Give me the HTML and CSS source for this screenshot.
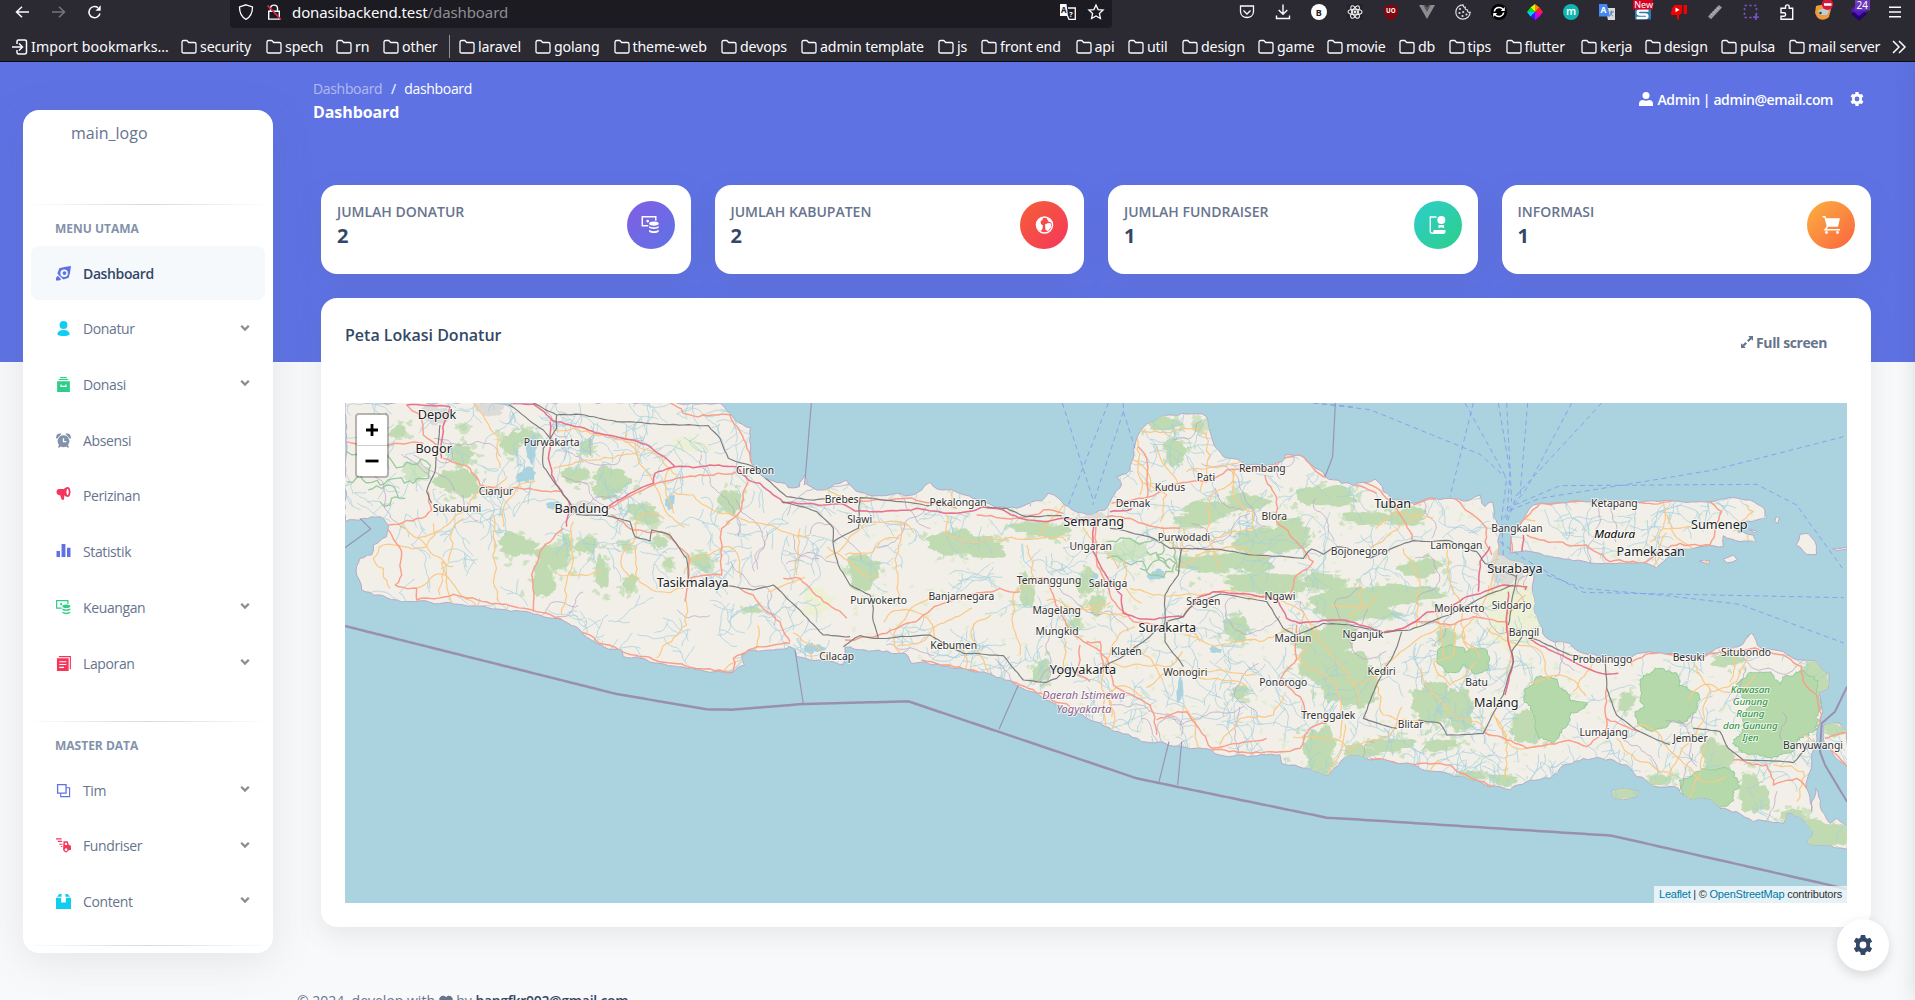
FILE: index.html
```html
<!DOCTYPE html>
<html lang="id">
<head>
<meta charset="utf-8">
<title>Dashboard</title>
<link rel="stylesheet" href="styles.css">
</head>
<body>
<svg class="defs" width="0" height="0" aria-hidden="true">
  <symbol id="folder" viewBox="0 0 16 16"><path d="M1 3.2C1 2 1.600 1.500 2.600 1.500h3.200l1.900 2h5.700c1 0 1.600.6 1.600 1.600v7.300c0 1-.6 1.600-1.600 1.600H2.600c-1 0-1.600-.6-1.600-1.600z" fill="none" stroke="#fbfbfe" stroke-width="1.300"/></symbol>
  <symbol id="chev" viewBox="0 0 10 8"><path d="M1.200 1.700 5 5.500l3.800-3.800" fill="none" stroke="#8b8d92" stroke-width="2.300"/></symbol>
  <symbol id="gear" viewBox="0 0 20 20"><path fill-rule="evenodd" d="M7.900 0h4.200l.6 2.800 1.600.9 2.700-.9 2.100 3.600L17 8.300v3.400l2.100 1.900-2.100 3.600-2.700-.9-1.600.9-.6 2.800H7.900l-.6-2.800-1.600-.9-2.700.9-2.100-3.600L3 11.700V8.300L.9 6.400 3 2.800l2.700.9 1.600-.9zM10 6.600a3.400 3.400 0 1 0 0 6.800 3.400 3.400 0 0 0 0-6.800z" fill="currentColor"/></symbol>
  <symbol id="money" viewBox="0 0 16 16"><path d="M6 8.700H.7V.7h12v3.600" fill="none" stroke="currentColor" stroke-width="1.300"/><circle cx="5.500" cy="4.500" r="1.200" fill="currentColor"/><ellipse cx="11" cy="6.700" rx="4.300" ry="1.900" fill="currentColor"/><path d="M6.700 8.800c1.500 1.600 7 1.600 8.600 0v1.500c-1.500 1.700-7 1.700-8.600 0zM6.700 12.300c1.500 1.600 7 1.600 8.600 0v1.400c-1.500 2-7 2-8.600 0z" fill="currentColor"/></symbol>
</svg>

<header class="browser">
  <div class="toolbar">
    <div class="nav">
      <svg viewBox="0 0 16 16"><path d="M14 8H1.500M7 2.800 1.500 8 7 13.200" fill="none" stroke="#fbfbfe" stroke-width="1.500"/></svg>
      <svg viewBox="0 0 16 16"><path d="M1 8h12.500M8 2.800 13.500 8 8 13.200" fill="none" stroke="#77767d" stroke-width="1.500"/></svg>
      <svg viewBox="0 0 16 16"><path d="M13 9.500A5.600 5.600 0 1 1 11 3.700" fill="none" stroke="#fbfbfe" stroke-width="1.500"/><path d="M13.700 1.300v5.400H8.500z" fill="#fbfbfe"/></svg>
    </div>
    <div class="urlbar">
      <svg viewBox="0 0 16 16"><path d="M8 .8 14.500 3c0 6.200-1.600 9.800-6.500 12.300C3.100 12.800 1.500 9.200 1.500 3z" fill="none" stroke="#fbfbfe" stroke-width="1.300"/></svg>
      <svg viewBox="0 0 16 16"><path d="M4.500 7V4.300C4.500 0 11.500 0 11.500 4.300V7M2.700 7.300h10.600v7.800H2.700z" fill="none" stroke="#fbfbfe" stroke-width="1.400"/><path d="M1.500 1.500 15 15.500" stroke="#e22850" stroke-width="1.700"/></svg>
      <div class="url">donasibackend.test<span>/dashboard</span></div>
      <svg class="push" viewBox="0 0 16 16"><path d="M0 0h6.500l1.500 12H0z" fill="#fbfbfe"/><path d="M8 4h7.300v11.300H9L7.500 12" fill="none" stroke="#fbfbfe" stroke-width="1.300"/><text x="1" y="9" font-size="8" font-weight="700" fill="#1c1b22">A</text><text x="9.200" y="12.500" font-size="7" font-weight="700" fill="#fbfbfe">?</text></svg>
      <svg viewBox="0 0 16 16"><path d="m8 1 2.100 4.600 5 .5-3.700 3.400 1 5L8 12l-4.400 2.500 1-5L.9 6.100l5-.5z" fill="none" stroke="#fbfbfe" stroke-width="1.300"/></svg>
    </div>
    <div class="exts">
      <svg viewBox="0 0 16 16"><path d="M1.500 2h13v5.500c0 8-13 8-13 0zM4.500 6.500 8 10l3.500-3.500" fill="none" stroke="#fbfbfe" stroke-width="1.300"/></svg>
      <svg viewBox="0 0 16 16"><path d="M8 .5V10M3.700 6 8 10.300 12.300 6M1.500 11.500v3h13v-3" fill="none" stroke="#fbfbfe" stroke-width="1.400"/></svg>
      <svg viewBox="0 0 16 16"><circle cx="8" cy="8" r="8" fill="#fff"/><text x="4.800" y="11.500" font-size="9" font-weight="700" fill="#222">B</text></svg>
      <svg viewBox="0 0 16 16"><rect width="16" height="16" fill="#242329"/><g fill="none" stroke="#eee" stroke-width="1.100"><ellipse cx="8" cy="8" rx="7" ry="2.700"/><ellipse cx="8" cy="8" rx="7" ry="2.700" transform="rotate(60 8 8)"/><ellipse cx="8" cy="8" rx="7" ry="2.700" transform="rotate(120 8 8)"/></g><circle cx="8" cy="8" r="1.400" fill="#eee"/></svg>
      <svg viewBox="0 0 16 16"><path d="M8 0c2 1.600 4.500 2 7 2v6c0 4-3 6.500-7 8-4-1.500-7-4-7-8V2c2.500 0 5-.4 7-2z" fill="#800610"/><text x="3" y="9.300" font-size="6.200" font-weight="700" fill="#fff">UO</text></svg>
      <svg viewBox="0 0 16 16"><path d="M0 1h4.500L8 7.500 11.500 1H16L8 15z" fill="#8d8d91"/><path d="M4.500 1h2L8 3.800 9.500 1h2L8 7.500z" fill="#5b5b60"/></svg>
      <svg viewBox="0 0 16 16"><path d="M8 .8a7.200 7.200 0 1 0 7.200 7.500c-2 .5-3-1-2.700-2.300-2 0-2.800-1.300-2.200-2.600C8.800 3.300 8 2.300 8 .8z" fill="none" stroke="#ddd" stroke-width="1.200"/><g fill="#ddd"><circle cx="5" cy="5" r="1.100"/><circle cx="4.500" cy="9" r="1.100"/><circle cx="8.200" cy="8" r="1.100"/><circle cx="7.500" cy="12" r="1.100"/><circle cx="11.500" cy="10.500" r="1.100"/></g></svg>
      <svg viewBox="0 0 16 16"><circle cx="8" cy="8" r="8" fill="#000"/><path d="M3.300 7.500c.7-4.500 7-5.500 9-1.500M12.700 8.500c-.7 4.500-7 5.500-9 1.500" fill="none" stroke="#fff" stroke-width="1.500"/><path d="M13.800 3v4h-4zM2.200 13V9h4z" fill="#fff"/></svg>
      <svg viewBox="0 0 16 16"><path d="M8 8V0L3.500 3.500z" fill="#cf0"/><path d="M8 8V0l4.500 3.500z" fill="#f80"/><path d="m8 8 4.500-4.500L16 8z" fill="#f22"/><path d="M8 8h8l-3.500 4.500z" fill="#f0a"/><path d="M8 8v8l4.500-3.500z" fill="#c0f"/><path d="M8 8v8l-4.500-3.500z" fill="#22f"/><path d="M8 8H0l3.500 4.500z" fill="#0cf"/><path d="M8 8H0l3.500-4.500z" fill="#0d3"/></svg>
      <svg viewBox="0 0 16 16"><circle cx="8" cy="8" r="8" fill="#0fb5b0"/><text x="3" y="11.300" font-size="10.500" font-weight="600" fill="#fff">m</text></svg>
      <svg viewBox="0 0 16 16"><path d="M6 4h10v12H9z" fill="#dcdcdc"/><path d="M0 0h8l3 12.500H0z" fill="#4688f1"/><text x="1.500" y="9" font-size="8.500" font-weight="700" fill="#fff">A</text><path d="M10.500 8h4.500M12.700 6.500V8c0 2-1 3.500-2 4M11.300 9c.7 1.600 1.700 2.500 3 3" fill="none" stroke="#5a7fb5"/></svg>
      <svg class="wide" viewBox="0 0 20 20"><path d="M2 7h16v11.500H2z" fill="#2b7dac"/><path d="M15.500 9.500H7c-3 0-3 4 0 4h5.500c2.500 0 2.500 3.500 0 3.500H3.500" fill="none" stroke="#fff" stroke-width="2.500"/><rect x="0" y="-1" width="20" height="9.500" fill="#d70022"/><text x="1.200" y="7.200" font-size="9" fill="#fff">New</text></svg>
      <svg viewBox="0 0 16 16"><path d="M4 1h7v8L8 11v5c-3 0-2-4-2-5H0C0 7 1 3 4 1zM12.500 1H16v9h-3.500z" fill="#f40000"/><path d="m4.500 3.500 4 2.300-4 2.400z" fill="#fff"/></svg>
      <svg viewBox="0 0 16 16"><path d="M1 12.500 12 1l3 2.500L4 15.300z" fill="#98989c"/><path d="m4 9.500 1.500 1.500M6 7.500 7.500 9M8 5.500 9.500 7M10 3.500 11.500 5" stroke="#c9c9cc"/></svg>
      <svg viewBox="0 0 16 16"><path d="M1.500 1.500h12v12h-12z" fill="none" stroke="#7a50c7" stroke-width="1.600" stroke-dasharray="2.400 2.400"/><path d="M13 10v6M10 13h6" stroke="#7a50c7" stroke-width="1.700"/></svg>
      <svg viewBox="0 0 16 16"><path d="M2 6V4.200h4.500V2.800c0-2.600 3.700-2.600 3.700 0v1.400h3.500v11H2v-3h3c2.200 0 2.200-3.400 0-3.400H2z" fill="none" stroke="#fbfbfe" stroke-width="1.400"/></svg>
      <svg class="wide" viewBox="0 0 20 20"><path d="M3 5c5-2 12-1 15 3l-2 8c-4 4-10 3-12 0L2 12z" fill="#f09a3a"/><path d="M5 10c3-3 8-3 11 0l-2 4H7z" fill="#b8cfd8"/><circle cx="7.500" cy="12" r="1.200" fill="#333"/><circle cx="14.500" cy="3.300" r="5.700" fill="#d7183c"/><path d="M11 3.500h7.500" stroke="#fff" stroke-width="2.500"/></svg>
      <svg class="wide" viewBox="0 0 20 20"><path d="m2 9 8-8 8 8-8 8z" fill="#5b14c8"/><path d="m2 13 3-2 5 4 5-4 3 2-8 7z" fill="#21056b"/><rect x="6" y="-1" width="15" height="10.500" fill="#6b39b8"/><text x="7.500" y="7.500" font-size="10" fill="#fff">24</text></svg>
      <svg viewBox="0 0 16 16"><path d="M2 3.200h12M2 8h12M2 12.800h12" stroke="#fbfbfe" stroke-width="1.500"/></svg>
    </div>
  </div>
  <div class="bookmarks">
    <span><svg viewBox="0 0 16 16"><path d="M5 5V2.500C5 1.500 5.500 1 6.500 1h6.200c1 0 1.800.7 1.800 1.700v10.600c0 1-.8 1.700-1.800 1.700H6.500c-1 0-1.500-.5-1.500-1.500V11M0 8h10M7 4.500 10.500 8 7 11.500" fill="none" stroke="#fbfbfe" stroke-width="1.500"/></svg><em>Import bookmarks…</em></span>
    <span><svg><use href="#folder"/></svg>security</span>
    <span><svg><use href="#folder"/></svg>spech</span>
    <span><svg><use href="#folder"/></svg>rn</span>
    <span><svg><use href="#folder"/></svg>other</span>
    <i></i>
    <span><svg><use href="#folder"/></svg>laravel</span>
    <span><svg><use href="#folder"/></svg>golang</span>
    <span><svg><use href="#folder"/></svg>theme-web</span>
    <span><svg><use href="#folder"/></svg>devops</span>
    <span><svg><use href="#folder"/></svg>admin template</span>
    <span><svg><use href="#folder"/></svg>js</span>
    <span><svg><use href="#folder"/></svg>front end</span>
    <span><svg><use href="#folder"/></svg>api</span>
    <span><svg><use href="#folder"/></svg>util</span>
    <span><svg><use href="#folder"/></svg>design</span>
    <span><svg><use href="#folder"/></svg>game</span>
    <span><svg><use href="#folder"/></svg>movie</span>
    <span><svg><use href="#folder"/></svg>db</span>
    <span><svg><use href="#folder"/></svg>tips</span>
    <span><svg><use href="#folder"/></svg>flutter</span>
    <span><svg><use href="#folder"/></svg>kerja</span>
    <span><svg><use href="#folder"/></svg>design</span>
    <span><svg><use href="#folder"/></svg>pulsa</span>
    <span><svg><use href="#folder"/></svg>mail server</span>
    <span><svg viewBox="0 0 16 16"><path d="m1 2 6 6-6 6M7 2l6 6-6 6" fill="none" stroke="#fbfbfe" stroke-width="1.500"/></svg></span>
  </div>
</header>

<div class="page">
  <aside class="sidebar">
    <div class="logo">main_logo</div>
    <hr>
    <h6>MENU UTAMA</h6>
    <ul>
      <li class="active"><svg viewBox="0 0 16 16" color="#5e72e4"><path fill-rule="evenodd" d="M16 0 9 1 3.500 2.500 1.500 8l1.300 1.500L6.500 13l1.500 1.500 5.500-2L15 7zM8.700 3.700a4 4 0 1 1 0 8 4 4 0 0 1 0-8z" fill="currentColor"/><circle cx="9" cy="7.500" r="2" fill="currentColor"/><path d="M2 10.500 5.500 14 3.500 15.500H0v-3z" fill="currentColor"/></svg>Dashboard</li>
      <li><svg viewBox="0 0 16 16" color="#11cdef"><circle cx="8" cy="4.200" r="4.200" fill="currentColor"/><path d="M1.500 14c0-6 13-6 13 0 0 2.500-13 2.500-13 0z" fill="currentColor"/></svg>Donatur<svg class="chev"><use href="#chev"/></svg></li>
      <li><svg viewBox="0 0 16 16" color="#2dce89"><path d="M4.500 0h7v1.200h-7zM3 2.200h10v1H3z" fill="currentColor"/><path fill-rule="evenodd" d="M1.200 4.400h13.600V16H1.200zM4.700 8v2.700h6.600V8H10v1.300H6V8z" fill="currentColor"/></svg>Donasi<svg class="chev"><use href="#chev"/></svg></li>
      <li><svg viewBox="0 0 16 16" color="#8392ab"><path fill-rule="evenodd" d="M8 2.500a6.300 6.300 0 0 1 4.800 10.300L14 15.500h-2l-.8-1.200a6.600 6.600 0 0 1-6.400 0L4 15.500H2l1.200-2.700A6.300 6.300 0 0 1 8 2.500zM7.300 5.500v4.300h3.700V8.500H8.700v-3z" fill="currentColor"/><path d="M0 5.500C0 1 3 0 6 .8L1 6zM16 5.500C16 1 13 0 10 .8L15 6z" fill="currentColor"/></svg>Absensi</li>
      <li class="raise"><svg viewBox="0 0 16 16" color="#f5365c"><path fill-rule="evenodd" d="M8.500 2.300C10 .7 12 0 13 0c4 0 4 11.500 0 11.500-1.500 0-3-1-4-2L8.500 14.500H6L4.200 9.300H3C-1 9.300-1 2.300 3 2.300zM12.700 2c-1.800 1-1.800 6.500 0 7.500 1.800-1 1.800-6.500 0-7.500z" fill="currentColor"/></svg>Perizinan</li>
      <li class="raise"><svg viewBox="0 0 16 16" color="#5e72e4"><path d="M0 9h4v7H0zM5.800 1h4.400v15H5.800zM12 5.500h4V16h-4z" fill="currentColor"/></svg>Statistik</li>
      <li><svg color="#2dce89"><use href="#money"/></svg>Keuangan<svg class="chev"><use href="#chev"/></svg></li>
      <li><svg viewBox="0 0 16 16" color="#f5365c"><path d="M3 .7h12.300V14" fill="none" stroke="currentColor" stroke-width="1.200"/><path fill-rule="evenodd" d="M1 2.500h12.500V16H1zM3.500 5.500v1.200H11V5.500zm0 3v1.200H11V8.500zm0 3v1.200h5v-1.200z" fill="currentColor"/></svg>Laporan<svg class="chev"><use href="#chev"/></svg></li>
    </ul>
    <hr class="mid">
    <h6>MASTER DATA</h6>
    <ul class="second">
      <li><svg viewBox="0 0 16 16" color="#5e72e4"><path d="M1.700 1.700h9v9h-9z" fill="none" stroke="currentColor" stroke-width="1.400"/><path d="M5 11v3.500h9.500V5H11" fill="none" stroke="currentColor" stroke-width="1.200"/></svg>Tim<svg class="chev"><use href="#chev"/></svg></li>
      <li><svg viewBox="0 0 16 16" color="#f5365c"><path d="M0 .3h6v1.200H0zM2 3h4.500v1.200H2zM3.500 6H7v1.200H3.500zM5 8.700h2v1H5z" fill="currentColor"/><path fill-rule="evenodd" d="M8 3.500h4.500l1 3.500 2.500 1.500v4l-3 .7c-1 3-4.500 2-4.500.3L7.500 13zM9.500 5v2.500H12L11.300 5zM10.700 11a1.400 1.400 0 1 0 0 2.800 1.400 1.400 0 0 0 0-2.800z" fill="currentColor"/></svg>Fundriser<svg class="chev"><use href="#chev"/></svg></li>
      <li><svg viewBox="0 0 16 16" color="#11cdef"><path d="M3.500 0H6v3H1zM10 0h2.500L15 3h-5zM0 4h5.500v5h5V4H16v12H0z" fill="currentColor"/></svg>Content<svg class="chev"><use href="#chev"/></svg></li>
    </ul>
    <hr class="last">
  </aside>

  <main class="main">
    <div class="topnav">
      <div>
        <div class="crumbs"><span>Dashboard</span><b>/</b>dashboard</div>
        <div class="title">Dashboard</div>
      </div>
      <div class="user">
        <svg viewBox="0 0 14 14"><circle cx="7" cy="3.500" r="3.500" fill="#fff"/><path d="M0 14V11.500C0 9 2 8 4 8c2 1 4 1 6 0 2 0 4 1 4 3.500V14z" fill="#fff"/></svg>
        Admin | admin@email.com
        <svg class="cog"><use href="#gear"/></svg>
      </div>
    </div>

    <div class="cards">
      <div class="card"><div><p>JUMLAH DONATUR</p><strong>2</strong></div><div class="dot violet"><svg><use href="#money"/></svg></div></div>
      <div class="card"><div><p>JUMLAH KABUPATEN</p><strong>2</strong></div><div class="dot red"><svg viewBox="0 0 18 18"><circle cx="9" cy="9" r="8" fill="none" stroke="#fff" stroke-width="1.500"/><path d="M1 8c0-4 3-6.500 6-7l.5 2L5 5.500 5.500 8l2 1.500-.5 3L5.500 15C2.500 14 1 11 1 8zM11 1.500c2.500.7 4.500 2.500 5 5L13.500 6 12 4zM9.500 8.500 12.500 7l3 .5v4L12.500 15 10 14z" fill="#fff"/></svg></div></div>
      <div class="card"><div><p>JUMLAH FUNDRAISER</p><strong>1</strong></div><div class="dot green"><svg viewBox="0 0 18 18"><path d="M8 1H1.800v14.500c0 1 .7 1.700 1.700 1.700H15" fill="none" stroke="#fff" stroke-width="1.400"/><circle cx="12.800" cy="4" r="4" fill="#fff"/><path d="M10 9h5.600v3.300l-2.800-1-2.800 1zM5 14h12v1.500c0 1.500-1 2.400-2 2.400H3.500C4.800 17 5 16 5 14z" fill="#fff"/></svg></div></div>
      <div class="card"><div><p>INFORMASI</p><strong>1</strong></div><div class="dot orange"><svg viewBox="0 0 18 18"><path d="M0 .8h2.500L5 10.500 2.500 13.700h15" fill="none" stroke="#fff" stroke-width="1.400"/><path d="M3 2.300h14.500l-2 8.500H5z" fill="#fff"/><circle cx="4" cy="16.500" r="1.400" fill="#fff"/><circle cx="15" cy="16.500" r="1.400" fill="#fff"/></svg></div></div>
    </div>

    <section class="mapcard">
      <div class="maphead">
        <h5>Peta Lokasi Donatur</h5>
        <div class="full"><svg viewBox="0 0 12 12"><path d="M7.200 0H12v4.800L10.300 3.200 7.500 6 6 4.500l2.800-2.800zM4.800 12H0V7.200l1.700 1.600L4.500 6 6 7.500l-2.800 2.800z" fill="#67748e"/></svg>Full screen</div>
      </div>
      <div class="map">
        <svg id="java" viewBox="15 24 4506 1500" preserveAspectRatio="none">
          <g id="layers"></g>
          <g class="place big">
            <text x="291" y="71">Depok</text><text x="281" y="174">Bogor</text><text x="725" y="354">Bandung</text><text x="1058" y="577">Tasikmalaya</text>
            <text x="2261" y="392">Semarang</text><text x="2482" y="711">Surakarta</text><text x="2229" y="838">Yogyakarta</text>
            <text x="3158" y="340">Tuban</text><text x="3525" y="533">Surabaya</text><text x="3469" y="936">Malang</text><text x="3932" y="484">Pamekasan</text><text x="4138" y="401">Sumenep</text>
          </g>
          <g class="place">
            <text x="635" y="152">Purwakarta</text><text x="468" y="299">Cianjur</text><text x="351" y="350">Sukabumi</text><text x="1245" y="237">Cirebon</text>
            <text x="1505" y="323">Brebes</text><text x="1559" y="384">Slawi</text><text x="1490" y="794">Cilacap</text><text x="1854" y="334">Pekalongan</text>
            <text x="2379" y="335">Demak</text><text x="2490" y="288">Kudus</text><text x="2598" y="257">Pati</text><text x="2767" y="232">Rembang</text><text x="2803" y="376">Blora</text>
            <text x="2252" y="465">Ungaran</text><text x="2532" y="438">Purwodadi</text><text x="2127" y="568">Temanggung</text><text x="2304" y="576">Salatiga</text>
            <text x="1616" y="628">Purwokerto</text><text x="1864" y="615">Banjarnegara</text><text x="2150" y="657">Magelang</text><text x="2151" y="719">Mungkid</text>
            <text x="1841" y="762">Kebumen</text><text x="2359" y="781">Klaten</text><text x="2590" y="629">Sragen</text><text x="2820" y="615">Ngawi</text><text x="2859" y="740">Madiun</text>
            <text x="2536" y="842">Wonogiri</text><text x="2830" y="874">Ponorogo</text><text x="2965" y="972">Trenggalek</text><text x="3058" y="481">Bojonegoro</text>
            <text x="3069" y="730">Nganjuk</text><text x="3125" y="841">Kediri</text><text x="3212" y="998">Blitar</text><text x="3410" y="873">Batu</text><text x="3349" y="461">Lamongan</text>
            <text x="3531" y="410">Bangkalan</text><text x="3823" y="336">Ketapang</text><text x="3358" y="652">Mojokerto</text><text x="3515" y="643">Sidoarjo</text><text x="3552" y="724">Bangil</text>
            <text x="3787" y="804">Probolinggo</text><text x="4046" y="798">Besuki</text><text x="4218" y="783">Situbondo</text><text x="3791" y="1023">Lumajang</text><text x="4051" y="1040">Jember</text><text x="4419" y="1061">Banyuwangi</text>
          </g>
          <g class="place region"><text x="2231" y="912">Daerah Istimewa</text><text x="2232" y="953">Yogyakarta</text></g>
          <g class="place isle"><text x="3824" y="428">Madura</text></g>
          <g class="place park"><text x="4231" y="895">Kawasan</text><text x="4231" y="930">Gunung</text><text x="4231" y="967">Raung</text><text x="4231" y="1002">dan Gunung</text><text x="4231" y="1038">Ijen</text></g>
        </svg>
        <div class="zoom"><svg viewBox="0 0 30 30"><path d="M15 9v12M9 15h12" stroke="#000" stroke-width="2.800"/></svg><svg viewBox="0 0 30 30"><path d="M8.500 15h13" stroke="#000" stroke-width="2.800"/></svg></div>
        <div class="attr"><a>Leaflet</a> | © <a>OpenStreetMap</a> contributors</div>
      </div>
    </section>

    <footer>© 2024, develop with <svg viewBox="0 0 16 14"><path d="M8 14 1.200 7.200C-2 3.500 3.500-2.500 8 2c4.500-4.500 10 1.500 6.800 5.200z" fill="#67748e"/></svg> by <b>bangfkr002@gmail.com</b></footer>
  </main>

  <div class="drawer"></div>
  <div class="fab"><svg><use href="#gear"/></svg></div>
</div>
<script src="map.js"></script>
</body>
</html>
```
FILE: styles.css
```css
* { box-sizing: border-box; }
body { margin: 0; width: 1915px; height: 1000px; overflow: hidden; background: #f8f9fa; font-family: "Open Sans", "Noto Sans", sans-serif; color: #67748e; }
svg { display: block; flex: none; }
.defs { display: none; }
p, h5, h6, ul { margin: 0; padding: 0; list-style: none; }

.browser { height: 62px; background: #2b2a33; border-bottom: 1px solid #0c0c0d; color: #fbfbfe; font-family: "Noto Sans", sans-serif; overflow: hidden; }
.toolbar { display: flex; height: 28px; }
.toolbar svg { width: 16px; height: 16px; overflow: visible; }
.nav { display: flex; width: 230px; padding: 4px 0 0 15px; gap: 20px; }
.urlbar { display: flex; width: 882px; height: 28px; background: #1c1b22; border-radius: 0 0 4px 4px; padding: 4px 8px 0; gap: 12px; }
.url { font-size: 15px; line-height: 17px; margin-left: -2px; letter-spacing: -.1px; }
.url span { color: #8f8e94; }
.urlbar .push { margin-left: auto; }
.exts { display: flex; margin-left: 117px; padding-top: 4px; }
.exts svg { margin: 0 10px; }
.exts svg.wide { width: 20px; height: 20px; margin: -3px 8px 0; }
.bookmarks { display: grid; height: 33px; padding: 4px 0 0 12px; align-items: center; grid-template-columns: 169px 85px 70px 47px 65.500px 10.500px 76px 78.500px 107.500px 80px 137px 43px 94.500px 52.500px 54px 76px 69px 72px 49.500px 57px 75.500px 64px 76px 68px 102.500px 20px; }
.bookmarks span { display: flex; align-items: center; gap: 3px; font-size: 14.200px; line-height: 20px; white-space: nowrap; letter-spacing: -.15px; }
.bookmarks em { font-style: normal; letter-spacing: .1px; }
.bookmarks svg { width: 16px; height: 16px; }
.bookmarks i { width: 1px; height: 23px; background: #8f8e94; }

.page { position: relative; display: flex; height: 938px; overflow: hidden; background: linear-gradient(#5e72e4 300px, #f8f9fa 300px); }
.sidebar { width: 250px; height: 843px; margin: 48px 0 0 23px; flex: none; border-radius: 16px; background: #fff; box-shadow: 0 8px 42px rgba(90, 100, 115, .13); overflow: clip; }
.logo { padding: 11px 0 0 48px; height: 94px; font-size: 16px; line-height: 24px; }
hr { height: 1px; margin: 0; border: 0; background: linear-gradient(90deg, transparent, rgba(0, 0, 0, .15), transparent); }
h6 { margin: 16px 0 0 32px; font-size: 12px; font-weight: 700; line-height: 15px; color: #8392ab; }
.sidebar ul { margin: 10px 8px 0; }
.sidebar li { display: flex; align-items: center; height: 54px; margin-bottom: 1.720px; padding: 0 15px 0 24.500px; border-radius: 8px; font-size: 14px; letter-spacing: -.38px; }
.sidebar li svg { width: 15px; height: 15px; margin-right: 12.500px; }
.sidebar li.raise svg { margin-top: -4px; height: 14px; }
.sidebar li svg.chev { width: 10px; height: 8px; margin: -2px 0 0 auto; }
.sidebar li.active { background: #f6f9fc; color: #344767; font-weight: 600; letter-spacing: -.38px; }
.sidebar .mid { margin-top: 30.500px; }
.sidebar ul.second { margin-top: 10.500px; }
.sidebar .last { margin-top: 17px; }

.main { width: 1598px; margin-left: 24px; flex: none; }
.topnav { display: flex; justify-content: space-between; height: 123px; padding: 17px 31px 0 16px; color: #fff; }
.crumbs { display: flex; font-size: 14px; line-height: 20px; letter-spacing: -.33px; }
.crumbs span { opacity: .5; }
.crumbs b { width: 22px; text-align: center; font-weight: 400; }
.title { font-size: 16px; line-height: 26px; font-weight: 700; letter-spacing: -.08px; }
.user { display: flex; align-items: center; height: 40px; font-size: 14px; font-weight: 600; letter-spacing: -.4px; gap: 5px; }
.user svg { width: 14px; height: 14px; }
.user .cog { margin: 0 0 0 12px; }
.cards { display: grid; grid-template-columns: repeat(4, 1fr); gap: 24px; margin: 0 24px; }
.card, .mapcard { background: #fff; border-radius: 16px; box-shadow: 0 8px 26px rgba(90, 100, 115, .12); }
.card { display: flex; justify-content: space-between; height: 89px; padding: 16px; }
.card p { font-size: 14px; line-height: 21px; font-weight: 600; letter-spacing: 0; }
.card strong { display: block; font-size: 20px; line-height: 28px; color: #344767; }
.dot { display: grid; place-items: center; width: 48px; height: 48px; border-radius: 50%; color: #fff; }
.dot svg { width: 19px; height: 18px; }
.violet { background: linear-gradient(135deg, #825ee4, #5e72e4); }
.red { background: linear-gradient(135deg, #f56036, #f5365c); }
.green { background: linear-gradient(135deg, #2dcecc, #2dce89); }
.orange { background: linear-gradient(135deg, #fbb140, #fb6340); }
.mapcard { height: 629px; margin: 24px 24px 0; padding: 24px; }
.maphead { display: flex; justify-content: space-between; height: 81px; }
.maphead h5 { font-size: 16px; line-height: 26px; font-weight: 600; color: #344767; }
.full { display: flex; gap: 3px; align-items: center; height: 40px; margin-right: 20px; font-size: 14px; font-weight: 700; letter-spacing: -.4px; }
.full svg { width: 12px; height: 12px; }
footer { display: flex; padding: 63px 0 0; font-size: 14px; line-height: 21px; white-space: pre; }
footer svg { width: 14px; height: 13px; margin-top: 5px; }
footer b { color: #344767; font-weight: 600; letter-spacing: -.3px; }

.map { position: relative; height: 500px; background: #aad3df; overflow: hidden; }
#java { width: 1502px; height: 500px; }
.place { font-family: "Noto Sans", sans-serif; font-size: 31px; text-anchor: middle; fill: #333; stroke: rgba(255, 255, 255, .7); stroke-width: 6px; stroke-linejoin: round; paint-order: stroke; }
.big { font-size: 38px; fill: #222; }
.region { font-style: italic; font-size: 33px; fill: #8d618b; }
.isle { font-style: italic; font-size: 35px; fill: #000; }
.park { font-style: italic; font-size: 29.500px; fill: #1d8b35; }
.zoom { position: absolute; left: 10px; top: 10px; width: 34px; height: 65px; border: 2px solid rgba(0, 0, 0, .25); border-radius: 4px; background: #fff; background-clip: padding-box; }
.zoom svg { width: 30px; height: 30px; }
.zoom svg + svg { height: 31px; border-top: 1px solid #ccc; }
.attr { position: absolute; right: 0; bottom: 0; height: 17px; padding: 0 5px; background: rgba(255, 255, 255, .7); font: 11px/17px "Liberation Sans", sans-serif; letter-spacing: -.22px; color: #333; white-space: nowrap; }
.attr a { color: #0078a8; }
.drawer { position: absolute; left: 1915px; top: 0; width: 360px; height: 938px; box-shadow: 0 0 20px rgba(60, 70, 85, .16); }
.fab { position: absolute; left: 1837px; top: 857px; width: 52px; height: 52px; border-radius: 50%; background: #fff; color: #344767; display: grid; place-items: center; box-shadow: 0 4px 12px rgba(0, 0, 0, .14); }
.fab svg { width: 20px; height: 20px; }
```
FILE: map.js
```js
// Builds the terrain, water and transport layers of the Java map.
var seed = 20240;
function rnd() { seed = (seed * 1664525 + 1013904223) % 4294967296; return seed / 4294967296; }
function pts(s) { return s.trim().split(/\s+/).map(function (p) { return p.split(',').map(Number); }); }
function rough(list, amp, closed) {
  var out = [list[0]], n = list.length, last = closed ? n : n - 1;
  for (var i = 0; i < last; i++) {
    var a = list[i], b = list[(i + 1) % n], dx = b[0] - a[0], dy = b[1] - a[1];
    var len = Math.hypot(dx, dy) || 1, k = Math.max(1, Math.round(len / 14)), w = 0;
    for (var j = 1; j < k; j++) {
      w = w * 0.7 + (rnd() - 0.5) * amp;
      out.push([a[0] + dx * j / k - dy / len * w, a[1] + dy * j / k + dx / len * w]);
    }
    out.push(b);
  }
  return 'M' + out.map(function (p) { return p[0].toFixed(1) + ' ' + p[1].toFixed(1); }).join('L') + (closed ? 'Z' : '');
}
function lines(s, amp) { return s.split('|').map(function (l) { return rough(pts(l), amp, false); }).join(''); }
function shapes(s, amp) { return s.split('|').map(function (l) { return rough(pts(l), amp, true); }).join(''); }
function path(d, attrs) { return '<path d="' + d + '" ' + attrs + '/>'; }
// Closed outline whose radius mixes a few slow waves with a little fine noise.
function blob(cx, cy, rx, ry, fuzz) {
  var d = '', n = Math.round(16 + (rx + ry) / 2);
  var a = rnd() * 6.28, b = rnd() * 6.28, c = rnd() * 6.28;
  for (var i = 0; i < n; i++) {
    var t = i / n * 6.283;
    var r = 1 + fuzz * (0.42 * Math.sin(2 * t + a) + 0.4 * Math.sin(3 * t + b) + 0.3 * Math.sin(7 * t + c) + (rnd() - 0.5) * 0.5);
    d += (i ? 'L' : 'M') + (cx + Math.cos(t) * rx * r).toFixed(1) + ' ' + (cy + Math.sin(t) * ry * r).toFixed(1);
  }
  return d + 'Z';
}
function walk(x, y, dir, steps, step, turn) {
  var d = 'M' + x.toFixed(1) + ' ' + y.toFixed(1), spots = [];
  for (var i = 0; i < steps; i++) {
    dir += (rnd() - 0.5) * turn;
    x += Math.cos(dir) * step; y += Math.sin(dir) * step;
    d += 'L' + x.toFixed(1) + ' ' + y.toFixed(1);
    spots.push([x, y, dir]);
  }
  return { d: d, spots: spots };
}

var java = '15,24 1140,24 1160,45 1185,75 1232,98 1232,150 1237,210 1262,240 1310,262 1345,278 1378,275 1394,240 1400,268 1430,285 1470,278 1500,265 1518,255 1530,270 1560,292 1625,302 1695,303 1745,285 1770,262 1805,285 1875,300 1935,322 1985,335 2045,335 2105,318 2125,295 2155,310 2185,335 2215,353 2265,355 2295,345 2315,310 2345,268 2330,245 2370,225 2375,200 2385,150 2400,110 2435,80 2485,60 2525,55 2600,65 2610,110 2635,165 2665,190 2715,208 2775,212 2825,200 2835,180 2880,180 2915,210 2955,245 3005,265 3040,272 3070,262 3105,252 3130,290 3160,315 3220,325 3270,308 3330,310 3380,318 3420,300 3435,335 3458,320 3460,365 3482,410 3475,480 3510,495 3550,505 3582,540 3580,640 3600,690 3608,715 3630,735 3690,745 3730,775 3790,785 3870,790 3930,770 3990,775 4080,790 4130,760 4195,755 4235,715 4265,760 4330,770 4385,795 4430,800 4468,835 4465,880 4436,892 4448,950 4430,1020 4415,1090 4400,1180 4415,1250 4427,1180 4440,1230 4470,1285 4490,1270 4521,1295 4521,1363 4470,1350 4400,1340 4420,1310 4380,1265 4340,1255 4330,1285 4240,1280 4190,1250 4140,1240 4100,1210 4060,1215 4015,1180 3930,1165 3890,1145 3860,1110 3810,1092 3730,1090 3670,1110 3630,1150 3570,1155 3510,1185 3450,1175 3380,1150 3300,1130 3190,1105 3090,1095 3030,1080 2995,1112 2965,1140 2915,1125 2865,1110 2825,1105 2820,1080 2695,1080 2665,1085 2615,1065 2565,1060 2475,1045 2405,1040 2335,1010 2265,980 2215,955 2155,930 2075,890 1995,855 1865,820 1755,800 1715,805 1695,775 1615,765 1515,757 1510,810 1440,795 1370,785 1365,765 1350,755 1300,765 1240,765 1205,780 1213,810 1180,832 1110,832 1040,820 960,805 900,790 850,785 845,765 770,745 720,705 640,670 580,657 500,645 400,632 270,622 140,608 65,585 50,540 60,490 95,480 100,450 140,425 145,390 120,365 70,370 15,380';
var isles = '3510,475 3512,420 3540,385 3580,330 3700,318 4000,318 4110,320 4170,307 4230,315 4275,345 4280,370 4220,378 4190,395 4195,412 4240,420 4248,440 4200,440 4150,422 4150,455 4080,455 4010,460 3970,500 3950,518 3920,505 3800,505 3760,505 3700,497 3600,475 3540,470|4380,418 4405,415 4425,440 4430,478 4400,478 4368,450|4150,492 4180,480 4192,494 4160,504|4078,498 4110,498 4105,508|4308,366 4318,368 4314,385 4304,380|4478,462 4521,456 4521,462 4490,467|4228,402 4250,408 4244,414|4452,990 4500,985 4521,1010 4521,1115 4480,1080 4452,1040|3815,1188 3850,1180 3895,1188 3890,1206 3850,1214 3820,1208';
var land = shapes(java, 9) + shapes(isles, 6);

var woods = [[365,180,35,32],[355,262,66,44],[515,145,35,32],[565,125,30,25],[705,240,38,26],[740,155,18,28],[810,262,62,44],[905,350,48,26],[935,375,20,16],[1170,320,32,42],[530,450,56,36],[640,485,48,38],[680,450,16,30],[740,450,32,26],[610,555,38,50],[785,535,20,50],[870,565,22,26],[1085,500,32,26],[960,440,22,18],[985,505,13,18],[1235,645,26,9],[175,110,26,20],[370,98,12,10],[860,455,16,14],[1570,530,55,50],[1830,440,70,38],[1910,455,90,34],[2080,400,60,22],[2140,410,50,20],[2505,170,38,38],[2470,85,60,20],[2575,95,15,20],[2600,350,85,32],[2550,380,50,18],[2720,320,60,28],[2780,440,100,44],[2850,410,66,36],[2610,505,90,32],[2720,500,80,34],[2750,560,110,28],[2820,570,90,30],[2910,300,40,30],[2980,305,76,28],[3000,630,96,54],[2950,560,60,28],[2690,700,35,42],[2960,740,85,58],[2930,790,60,70],[3000,840,75,80],[3060,880,55,65],[2940,1070,52,72],[2105,830,26,36],[2270,630,26,30],[3080,370,65,22],[3200,365,65,27],[3240,520,65,28],[3170,600,130,34],[3080,650,90,26],[3350,940,54,66],[3320,735,32,34],[3560,1000,56,46],[3860,920,26,28],[4130,1090,46,62],[4160,795,44,22],[4240,1200,44,64],[4430,840,48,46],[4450,1315,100,40],[4360,1262,40,20],[3960,1155,38,14],[3490,1155,42,18],[3150,1050,70,22],[3060,1070,50,22],[3300,1050,50,18],[3855,1196,44,20],[3400,1140,40,12],[2205,690,20,20],[2700,890,24,20],[2240,560,30,40],[2060,590,24,50],[4485,1005,34,20],[3270,920,60,60]];
var parks = [[3335,790,40,42],[3410,795,42,34],[3630,940,60,90],[3680,935,60,16],[3590,900,40,30],[3960,900,62,75],[4010,925,70,48],[3940,970,50,36],[4110,1180,90,56],[4320,970,110,100],[4380,900,60,66],[4270,1040,85,44],[4260,880,60,50]];
var green = woods.map(function (w) {
  return blob(w[0], w[1], w[2] * 0.95, w[3] * 0.95, 0.32);
}).join('');
var speck = '';
for (var i = 0; i < 1500; i++) {
  var w = woods[Math.floor(rnd() * woods.length)];
  var ang = rnd() * 6.28, far = 0.7 + rnd() * rnd() * 1.3;
  speck += blob(w[0] + Math.cos(ang) * w[2] * far, w[1] + Math.sin(ang) * w[3] * far, 3 + rnd() * 9, 2 + rnd() * 7, 0.6);
}
var dots = '';
for (i = 0; i < 1100; i++) { dots += blob(1500 + rnd() * 2900, 300 + rnd() * 850, 2 + rnd() * 7, 2 + rnd() * 5, 0.7); }
var park = parks.map(function (w) { return blob(w[0], w[1], w[2], w[3], 0.2); }).join('');

var rivers = '', borders = '', minor = '';
for (i = 0; i < 950; i++) {
  var px = 15 + rnd() * 4500, py = 24 + rnd() * 1250;
  var r = walk(px, py, (py > 600 ? 1.57 : -1.57) + (rnd() - 0.5) * 2.4, 6 + rnd() * 11, 10, 1.1);
  rivers += r.d;
  for (var b = 0; b < 2; b++) {
    var s = r.spots[Math.floor(rnd() * r.spots.length)];
    rivers += walk(s[0], s[1], s[2] + (rnd() < 0.5 ? -1 : 1) * 2.2, 2 + rnd() * 5, 9, 1).d;
  }
}
for (i = 0; i < 95; i++) { minor += walk(15 + rnd() * 4500, 24 + rnd() * 1200, rnd() * 6.28, 9 + rnd() * 20, 12, 0.85).d; }
for (i = 0; i < 110; i++) { borders += walk(15 + rnd() * 4500, 24 + rnd() * 1200, rnd() * 6.28, 8 + rnd() * 20, 11, 1.4).d; }
var lakes = [[560,240,26,22],[575,160,16,40],[990,322,14,20],[640,330,20,12],[2450,540,24,16],[2520,885,10,36],[2265,545,8,12],[2625,765,18,9],[1420,760,26,16]].map(function (w) { return blob(w[0], w[1], w[2], w[3], 0.4); }).join('');

var secondary = lines('280,385 285,420 260,455 190,455 130,450 100,490 130,520 150,580|325,500 330,430 370,370|300,600 305,500 340,515|460,360 465,440 460,560 475,620|700,380 695,520 680,600 665,660|1035,610 1040,690 980,745 950,790|890,450 890,550 950,590 1030,580|1380,400 1370,540|1000,290 1060,300 1110,340 1200,370 1310,400 1410,420|640,105 700,100 790,120 890,150 960,180 1010,240|400,24 440,80 470,120 480,220|640,220 780,195 900,170|1820,360 1820,420 1900,440 2000,430 2100,430 2180,440|1680,380 1670,480 1680,610|1515,480 1600,470 1620,440 1680,430|2060,450 2080,560 2020,600 2020,700 2040,780|2160,640 2280,650 2370,660|2180,740 2170,830|2600,110 2610,180 2580,290|2460,380 2480,300 2400,250|2680,220 2680,300 2740,350 2740,400 2600,440 2520,430|2530,400 2530,460|2400,300 2390,110 2530,100 2600,120|2370,580 2500,600 2620,590 2800,610|2530,720 2640,750 2760,740 2860,700|2580,740 2540,690|2540,830 2750,840|2640,1050 2700,970 2800,960 2830,900|3110,840 3130,960 3250,980|3060,560 3060,640 3030,670|3190,460 3240,560 3230,700|3310,440 3330,560 3360,620 3370,740 3400,760|3350,680 3340,780 3280,800|3460,950 3500,1020 3500,1150|3090,460 3180,390 3240,360|3280,800 3330,870 3410,800|3970,320 3970,400 3930,440|4060,400 3970,400|4060,810 4110,890 4090,980 4020,1080 3990,1140|4110,890 4190,860 4230,780|3830,1030 3900,1100 4000,1140|4220,330 4240,350 4180,410|4300,1110 4390,1130 4370,1220|3700,890 3740,830 3760,800', 12);
var trunk = lines('165,570 230,580 230,615 340,598 470,625 590,650 660,670 770,740 900,785 1040,815 1180,830 1180,790 1240,760 1350,745|120,365 155,420 185,470 185,540 165,570|145,390 245,370 275,345 265,290|20,140 250,145|310,190 390,220 420,270 540,280 660,290|580,650 575,540 600,470 640,430 670,400|800,345 900,290 1010,250 1190,230|990,24 1030,55 1090,60 1170,60 1200,110 1240,210|1225,260 1200,350 1145,400 1145,540 1050,550|1200,580 1240,600 1280,650 1320,680 1350,740|815,360 880,405 980,415 1045,480 1045,550 1035,620|1330,550 1380,550 1450,620 1520,670|1745,795 1900,825 2040,870 2190,935|1515,735 1640,715 1740,670 1810,625 1980,580 2040,590|1515,325 1700,310 1850,340|1910,360 2010,372 2110,345 2170,355|2315,325 2410,310 2500,270 2600,260 2660,225 2790,225 2830,190 2880,180 2950,245 3050,272 3110,295|2395,155 2420,190 2420,310|2300,365 2370,370 2440,395 2520,400|2775,240 2810,310 2810,380 2890,460 2920,500 2870,540 2850,600|2040,560 2120,550 2155,640 2180,690 2230,740 2300,790 2320,870 2430,930 2450,1020|2240,740 2280,740 2290,830|2220,750 2215,840 2250,860|2450,975 2540,950 2615,1060 2780,1030|2615,1065 2720,1073 2880,1060 2910,1000 2960,985|3070,262 3130,300 3170,340 3215,435|3220,330 3280,312 3350,315 3400,360 3440,400 3435,440 3455,480|3540,390 3600,325 3690,320 4110,320 4145,350 4110,450 4020,445|3560,420 3680,450 3740,450 3810,500 3920,500 3960,470 4020,445|3515,480 3512,420|3130,715 3230,680 3330,690 3400,665 3500,680 3510,760|3870,805 3930,775 4000,780 4080,790 4110,775 4200,765 4260,765 4330,780 4385,815 4390,860 4430,900 4445,960 4435,1040|3430,1010 3500,1035 3560,1060 3700,1040 3740,1055 3800,1000 3800,880|3800,970 3900,1010|4180,1095 4280,1110 4300,1170 4370,1150 4400,1180|2870,690 2870,790 2820,860 2880,905 2900,960|3090,1090 3200,1105 3330,1110 3380,1140 3470,1175|4455,1030 4521,1015|4455,1045 4521,1120|2270,370 2270,500 2310,600 2380,680 2480,690|200,30 240,60 250,120 290,150', 8);
var motor = lines('520,26 580,27 620,60 635,75 690,90 735,100 770,115 830,125 880,135 930,155 1005,215 1060,218 1110,210 1190,215 1225,255 1260,265 1300,300 1330,323 1450,330 1515,330 1545,348 1640,348 1730,340 1820,355 1880,350 1930,335 1990,345 2050,372 2120,380 2165,370 2255,375|630,80 632,150 625,190 635,240 670,300 690,330 680,395|805,335 870,295 940,265 945,235 1005,215|2310,350 2375,342|2262,385 2255,460 2280,510 2310,560 2345,600 2350,655 2400,672 2530,665 2570,610 2620,590 2780,605 2815,620 2840,670 2880,685 2950,675 3030,680 3130,712 3190,700 3260,652 3300,650 3380,605 3490,570 3560,575 3555,585|3450,455 3420,500 3415,590|3505,590 3500,690 3510,760 3520,800 3495,900|3565,730 3640,770 3730,815 3800,838 3835,835|3550,420 3550,500|330,35 310,110 305,190|200,30 330,35', 5);
var rail = lines('500,24 610,105 640,140|580,24 650,60 720,58 830,80 1030,90 1105,92 1140,130 1165,190 1240,215 1290,260 1340,305 1410,315 1460,312|650,60 650,100 610,160 610,215 680,310 710,358 800,362 870,380 885,425 930,438 935,405 990,420 1040,490 1045,550|1150,570 1240,585 1300,570 1450,720 1530,725|1325,320 1430,350 1480,400 1480,450 1495,510 1530,570 1590,600 1600,640 1600,680 1615,730|1480,440 1555,400 1560,308 1680,320 1770,332|1510,755 1560,722 1615,730 1770,720 1870,775 1990,782 2050,855 2120,862 2150,850 2170,830|1930,335 2000,340 2060,365 2165,362|300,90 285,230 260,290 275,325|2310,400 2370,412 2440,430 2490,460 2640,463 2740,480 2890,490 2915,462 2950,478 2990,455 3030,462|3090,490 3130,470 3220,437 3330,437 3410,470 3435,505 3530,545|2280,820 2340,790 2410,740 2480,680 2530,665 2560,630 2640,597 2780,620 2830,700 2870,720 2950,685 3030,690 3130,712 3210,705 3330,660 3440,600 3520,570|2525,460 2515,540 2475,600 2475,740 2530,815|3185,710 3160,780 3120,850 3070,970 3170,1000|3235,975 3300,985 3320,1020 3430,1015 3490,900 3520,800 3515,770 3550,720|3530,540 3505,690|3570,725 3690,780 3795,800 3800,880 3830,960 3900,1010 3990,1048|4060,1000 4140,1010 4165,1060 4210,1095 4360,1103 4410,1050', 3);
var sea = lines('15,693 830,897 1100,943 1175,944 1390,927 1705,919 2390,1150 2630,1200 2960,1268 3030,1272 3815,1322 4521,1482', 0);
var seaThin = lines('1414,24 1394,270|1365,765 1390,927|15,458 92,402 60,370|2035,870 1977,1003|2487,1040 2457,1160|2525,1040 2513,1170|2986,24 2978,185 2955,245', 0);
var strait = lines('4521,875 4485,950 4445,985 4440,1070 4455,1110 4521,1220', 0);
var ferry = lines('2167,24 2258,310|2305,24 2185,330|2350,24 2350,50 2258,330|2350,50 2385,160|2920,24 3090,44 3420,178 3500,250|3400,24 3330,305|3375,24 3500,250|3475,24 3510,230 3500,380|3500,24 3515,320|3563,24 3540,300|3695,24 3560,280 3490,370|3785,24 3530,300 3495,400|4511,125 4120,225 3850,270 3600,310 3500,350|3500,340 3660,272 4250,268 4370,330 4420,400 4515,530|3480,440 3550,490 3620,530 3730,592 4511,608|3620,540 3730,580 3980,602 4200,628 4511,744|3490,480 3485,370 3500,250|2920,24 3045,36', 0);
var ridge = lines('20,170 70,160 100,200 150,190 190,215 260,200 265,250 220,265 170,250 120,270 60,240 20,260|85,285 150,270 195,310 150,330 120,320|2300,440 2370,430 2430,440 2500,440 2510,500 2450,540 2390,500 2300,490|2420,470 2470,490 2490,520 2440,500 2400,520|2470,450 2450,480 2500,500 2520,530', 26);
var ridgeFill = blob(2365, 468, 55, 34, 0.25) + blob(225, 230, 44, 26, 0.3);

var line = 'fill="none" stroke-linejoin="round" ';
document.getElementById('layers').innerHTML =
  '<clipPath id="land">' + path(land, '') + '</clipPath>' +
  path(land, 'fill="#f2efe9" stroke="#b9a9c4" stroke-width="3"') +
  '<g clip-path="url(#land)">' +
  path(blob(3520, 650, 80, 120, 0.2) + blob(1050, 150, 60, 20, 0.4) + blob(1430, 620, 50, 40, 0.4), 'fill="#eef0d5"') +
  path(blob(2262, 370, 45, 16, 0.3) + blob(3500, 520, 55, 45, 0.3) + blob(450, 40, 50, 20, 0.3) + blob(290, 60, 40, 30, 0.3) + blob(720, 340, 50, 22, 0.3), 'fill="#dddbd8"') +
  path(dots, 'fill="#dcebc9" opacity=".75"') +
  path(speck, 'fill="#c8dfba" opacity=".85"') + path(green, 'fill="#c0dbb2"') +
  path(lakes, 'fill="#aad3df"') +
  path(rivers, line + 'stroke="#a5d0dd" stroke-width="2.700" opacity=".8"') +
  path(ridgeFill, 'fill="#bfdfb2" opacity=".7"') +
  path(park, 'fill="#b5d9aa" stroke="#93cb98" stroke-width="5"') +
  path(park, 'fill="#b5d9aa"') +
  path(ridge, line + 'stroke="#9acb9e" stroke-width="4"') +
  path(borders, line + 'stroke="#b7a3c4" stroke-width="3" opacity=".7"') +
  path(minor + secondary, line + 'stroke="#fac985" stroke-width="3.600"') +
  path(trunk, line + 'stroke="#fa9e88" stroke-width="4.300"') +
  path(motor, line + 'stroke="#e8718d" stroke-width="4.600"') +
  path(rail, line + 'stroke="#7d7d7d" stroke-width="3.500"') +
  '</g>' +
  path(ferry, line + 'stroke="#8aa0ee" stroke-width="3" stroke-dasharray="15 11"') +
  path(seaThin, line + 'stroke="#9b93b3" stroke-width="3.500"') +
  path(strait, line + 'stroke="#9b8fb0" stroke-width="6"') +
  path(sea, line + 'stroke="#9b8fb0" stroke-width="7.500"');
```
